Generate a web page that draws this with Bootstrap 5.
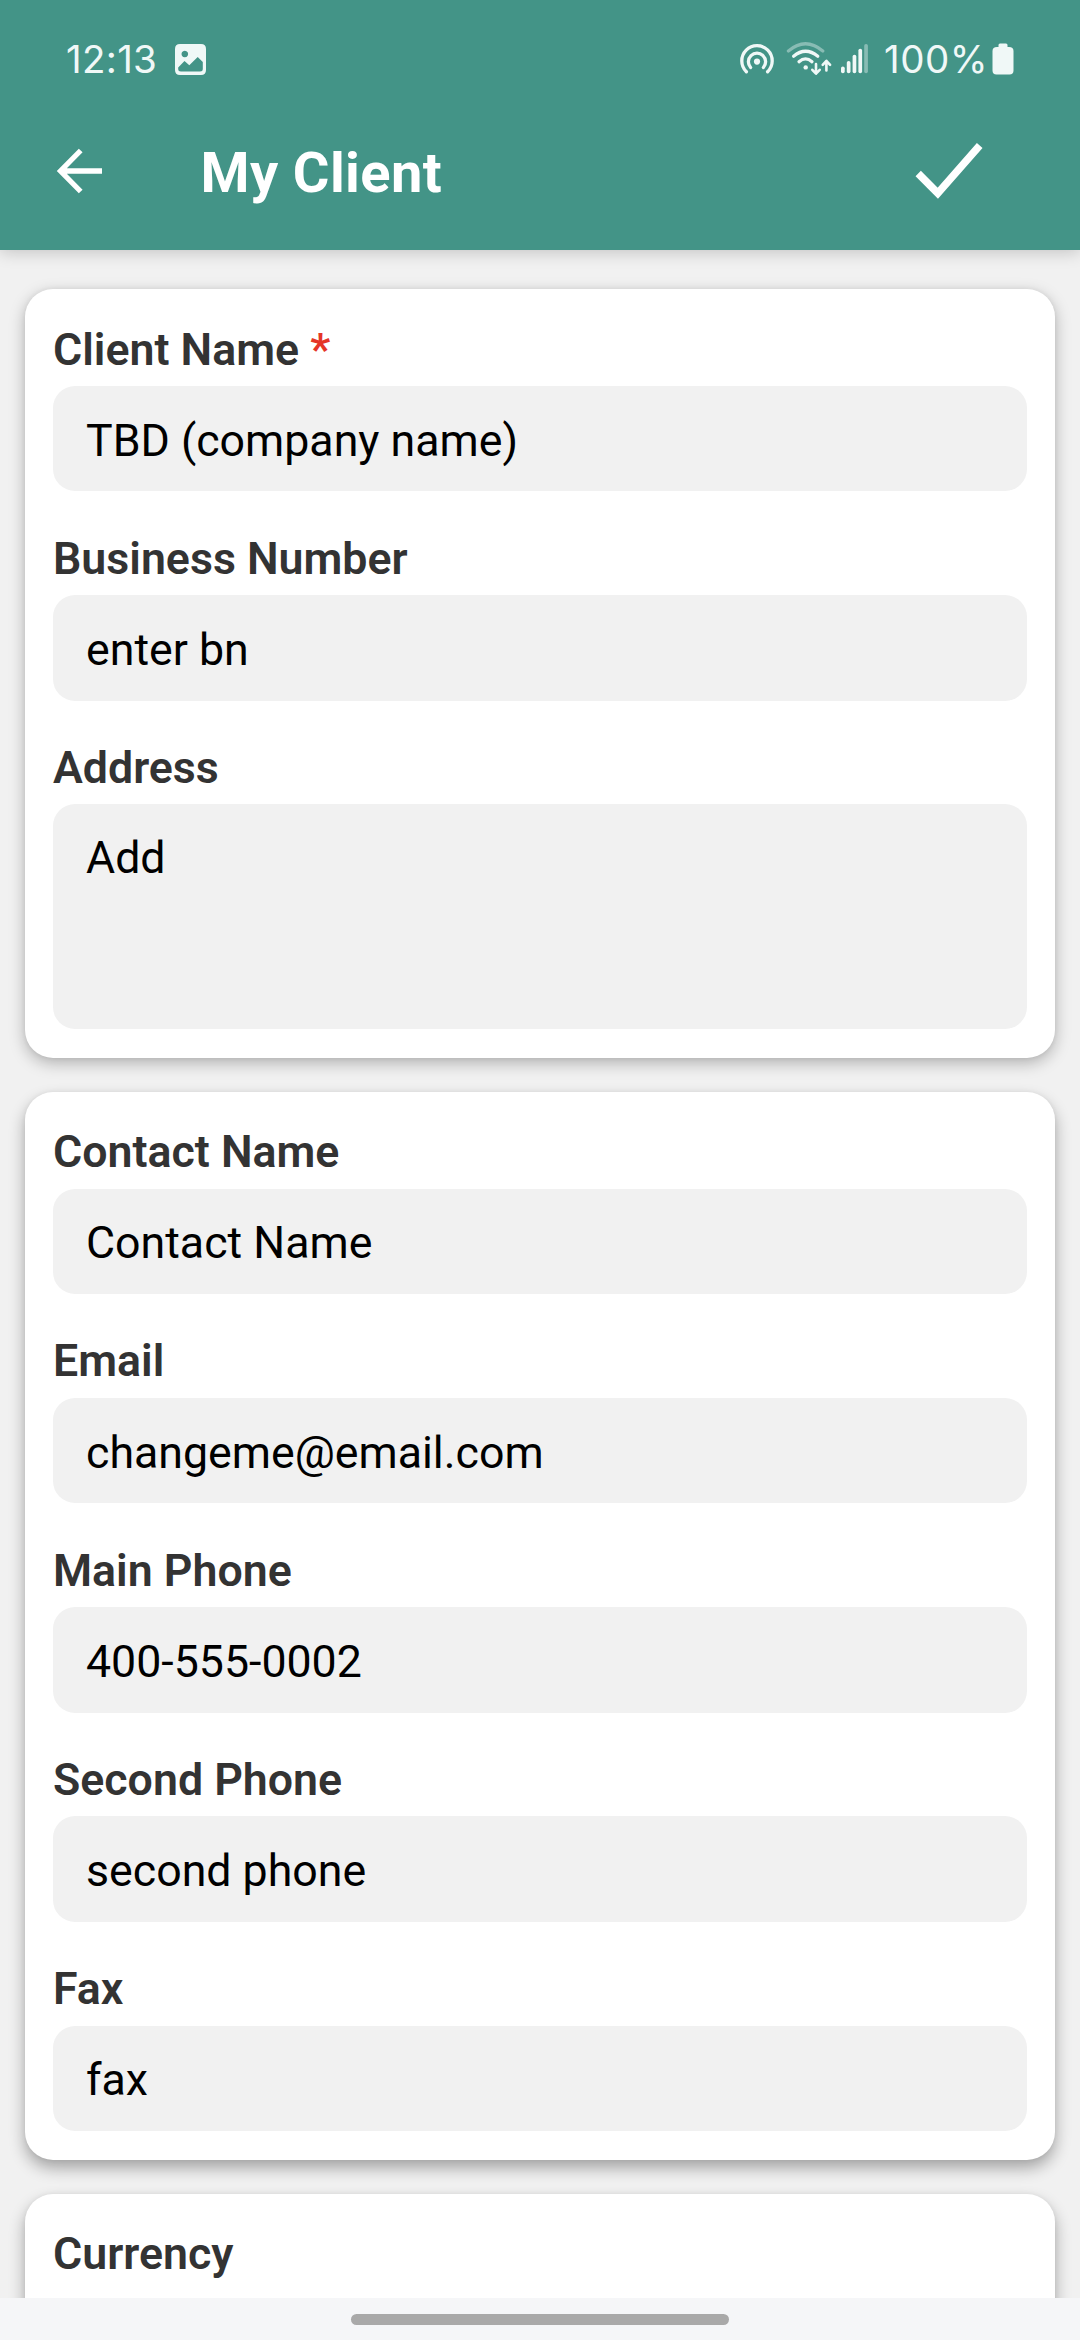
<!DOCTYPE html>
<html lang="en">
<head>
<meta charset="utf-8">
<meta name="viewport" content="width=device-width, initial-scale=1">
<title>My Client</title>
<link href="https://cdn.jsdelivr.net/npm/bootstrap@5.3.0/dist/css/bootstrap.min.css" rel="stylesheet">
<style>
  html, body { height: 100%; }
  body { font-family: Roboto, sans-serif; background: #f1f1f1; }
  .app-screen { height: 2340px; width: 1080px; }
  .app-header { height: 250px; background: #439487; box-shadow: 0 2px 16px rgba(0,0,0,.2); z-index: 2; }
  .status-row { height: 118px; padding: 0 66px 0 66px; color: #f0f8f7; font: 400 38.5px/1 Inter, sans-serif; }
  .status-row svg { display: block; flex: none; }
  .clock-text { width: 109px; letter-spacing: .3px; }
  .charge-text { width: 104px; letter-spacing: .5px; }
  .title-row { height: 106px; padding: 0 97px 0 56px; }
  .screen-title { font-size: 56px; font-weight: 700; line-height: 65px; letter-spacing: .4px; padding-top: 4px; margin: 0 0 0 98.5px; }
  .form-area { padding: 39px 25px 0; gap: 33.5px; min-height: 0; }
  .form-card { flex: none; border-radius: 28px; padding: 28px 28px 29px; box-shadow: 0 5px 16px rgba(0,0,0,.27), 0 0 5px rgba(0,0,0,.06); gap: 34.75px; }
  .form-card.raised { box-shadow: 0 8px 16px rgba(0,0,0,.32), 0 0 5px rgba(0,0,0,.05); }
  .field-label { font-size: 44.7px; font-weight: 600; line-height: 53px; color: #333; margin: 6.6px 0 9.4px; }
  .field-label span { color: #e53527; }
  .field-box, .field-box:focus { height: 105.5px; border: 0; border-radius: 22px; background: #f1f1f1; color: #000; font-size: 44.7px; line-height: 53px; padding: 4px 33px 0; }
  textarea.field-box { height: 224.7px; padding-top: 28px; resize: none; overflow: hidden; display: block; }
  .gesture-bar { height: 42px; background: #f5f6f8; z-index: 3; }
  .gesture-pill { width: 378px; height: 11px; background: #a9a9a9; }
</style>
<script src="https://cdn.jsdelivr.net/npm/bootstrap@5.3.0/dist/js/bootstrap.bundle.min.js"></script>
</head>
<body>
<div class="app-screen d-flex flex-column overflow-hidden">
  <header class="app-header position-relative flex-shrink-0">
    <div class="status-row d-flex align-items-center">
      <span class="clock-text flex-shrink-0">12:13</span>
      <svg width="31" height="31" viewBox="0 0 31 31"><path fill="#f0f8f7" fill-rule="evenodd" d="M5 0H26Q31 0 31 5V26Q31 31 26 31H5Q0 31 0 26V5Q0 0 5 0ZM9.8 6.700a3.300 3.300 0 1 0 .01 0ZM3.200 23.500V25Q3.200 27.500 6 27.500H25Q27.800 27.500 27.800 25V18L22.700 13 14.300 21.300 9.500 17Z"/></svg>
      <div class="d-flex align-items-center ms-auto">
        <svg width="36" height="34" viewBox="740 42 36 34" fill="none" stroke="#f0f8f7" stroke-width="3.3" stroke-linecap="round"><path d="M747.4 71.8A15.2 15.2 0 1 1 768.6 71.8M751.6 67.5A8.6 8.6 0 1 1 764.4 67.5"/><circle cx="758" cy="61.6" r="3.1" fill="#f0f8f7" stroke="none"/></svg>
        <svg class="ms-2 me-2" width="50" height="36" viewBox="785 41 50 36" fill="none" stroke="#f0f8f7" stroke-width="3.2" stroke-linecap="round"><path opacity=".4" d="M790.4 51Q807.5 36.5 824.8 51"/><path d="M795.6 56.3Q807.5 46.2 819.8 56.3M801 61.8Q807.5 56 814 61.8"/><circle cx="807.7" cy="67.4" r="2.2" fill="#f0f8f7" stroke="none"/><g stroke-width="2.6" stroke-linejoin="round"><path d="M818 64V73M814.3 69.8 818 73.7 821.7 69.8M828.4 70.5V61.5M824.7 64.8 828.4 60.8 832.1 64.8"/></g></svg>
        <svg class="me-3" width="27" height="32" viewBox="843 43 27 32" fill="#f0f8f7"><rect x="843" y="66.500" width="3.700" height="6.800" rx="1.800"/><rect x="848.800" y="61" width="3.700" height="12.300" rx="1.800"/><rect x="854.600" y="54.800" width="3.700" height="18.500" rx="1.800"/><rect x="860.400" y="48.800" width="3.700" height="24.500" rx="1.800"/><rect x="866.200" y="44" width="3.700" height="29.300" rx="1.800" opacity=".4"/></svg>
        <span class="charge-text">100%</span>
        <svg class="ms-1" width="22" height="32" viewBox="0 0 22 32" fill="#f0f8f7"><path d="M6.500 4V2Q6.500 .5 8 .5H14Q15.500 .5 15.500 2V4H17Q21.500 4 21.500 8V27.500Q21.500 31.500 17.500 31.500H4.500Q.5 31.500 .5 27.500V8Q.5 4 5 4Z"/></svg>
      </div>
    </div>
    <div class="title-row d-flex align-items-center text-white">
      <svg width="46" height="46" viewBox="56 148 46 46" fill="none" stroke="#fff" stroke-width="5.3"><path d="M80.700 150.500 60.500 171 80.700 191.500M60 171H102"/></svg>
      <h1 class="screen-title">My Client</h1>
      <svg class="ms-auto" width="68" height="58" viewBox="914 142 68 58" fill="none" stroke="#fff" stroke-width="7.5"><path d="M917.200 173.500 936.800 193.200 978.700 145.500"/></svg>
    </div>
  </header>

  <main class="form-area d-flex flex-column flex-grow-1 overflow-hidden">
    <section class="form-card bg-white d-flex flex-column">
      <div><label class="field-label d-block" for="clientName">Client Name <span>*</span></label><input id="clientName" class="form-control field-box" value="TBD (company name)"></div>
      <div><label class="field-label d-block" for="businessNo">Business Number</label><input id="businessNo" class="form-control field-box" value="enter bn"></div>
      <div><label class="field-label d-block" for="address">Address</label><textarea id="address" class="form-control field-box">Add</textarea></div>
    </section>
    <section class="form-card raised bg-white d-flex flex-column">
      <div><label class="field-label d-block" for="contact">Contact Name</label><input id="contact" class="form-control field-box" value="Contact Name"></div>
      <div><label class="field-label d-block" for="email">Email</label><input id="email" class="form-control field-box" value="changeme@email.com"></div>
      <div><label class="field-label d-block" for="phone1">Main Phone</label><input id="phone1" class="form-control field-box" value="400-555-0002"></div>
      <div><label class="field-label d-block" for="phone2">Second Phone</label><input id="phone2" class="form-control field-box" value="second phone"></div>
      <div><label class="field-label d-block" for="fax">Fax</label><input id="fax" class="form-control field-box" value="fax"></div>
    </section>
    <section class="form-card raised bg-white d-flex flex-column">
      <div class="pb-5"><div class="field-label">Currency</div></div>
    </section>
  </main>

  <footer class="gesture-bar position-relative flex-shrink-0 d-flex justify-content-center align-items-center">
    <div class="gesture-pill rounded-pill"></div>
  </footer>
</div>
</body>
</html>
